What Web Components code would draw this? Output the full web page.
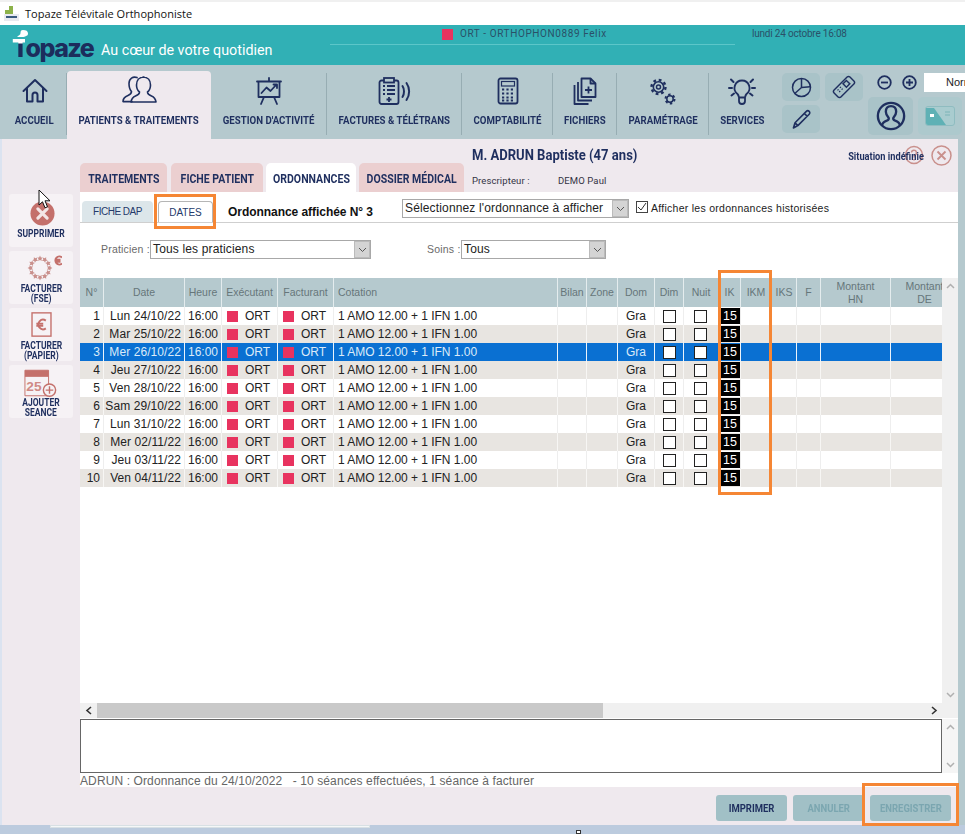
<!DOCTYPE html>
<html lang="fr"><head><meta charset="utf-8"><title>Topaze</title>
<style>
html,body{margin:0;padding:0;height:834px;width:965px;overflow:hidden;background:#efe9ee;font-family:"Liberation Sans",Arial,sans-serif}
</style></head><body>
<topaze-app></topaze-app>
<script>
const NAVY='#1f2f5f', ROSE='#c4706b';
const def=(n,fn)=>customElements.define(n,class extends HTMLElement{connectedCallback(){if(this.shadowRoot)return;this.attachShadow({mode:'open'}).innerHTML=fn(this)}});

const icons={
home:`<svg width="28" height="28" viewBox="0 0 28 28" fill="none" stroke="${NAVY}" stroke-width="2" stroke-linejoin="round" stroke-linecap="round"><path d="M2.500 14 14 3l11.500 11"/><path d="M6 11v13.500h5.500V18a2.500 2.500 0 0 1 5 0v6.500H22V11"/></svg>`,
people:`<svg width="36" height="28" viewBox="0 0 36 28" fill="none" stroke="${NAVY}" stroke-width="1.600" stroke-linejoin="round" stroke-linecap="round"><path d="M16 1.600c-4-1.500-8 1-8 6 0 4 .6 6 2.500 8 0 2-1 3-3.500 4-3 1.200-5 3-5 6h9"/><path d="M23 1c-5 0-7.500 3.500-7.500 8 0 3 1 5.500 3 7 0 2-1.500 3-4 4-2.500 1-4 3-4.500 6h25c-.5-3-2-5-4.500-6-2.500-1-4-2-4-4 2-1.500 3-4 3-7 0-4.500-2.500-8-7.500-8z"/></svg>`,
easel:`<svg width="28" height="28" viewBox="0 0 28 28" fill="none" stroke="${NAVY}" stroke-width="1.800" stroke-linecap="round" stroke-linejoin="round"><path d="M14 1v3M2 4.500h24M3.500 4.500V20h21V4.500M9 20l-3 7M19 20l3 7"/><path d="M6.500 16l5-5.500 4 3.500 6-6.500M18.500 7.500h3.500V11"/></svg>`,
clip:`<svg width="34" height="28" viewBox="0 0 34 28" fill="none" stroke="${NAVY}" stroke-width="1.800"><rect x="1.500" y="3.500" width="19" height="23.500" rx="2"/><rect x="6" y="1" width="10" height="4.500" fill="#b5c9ce"/><path d="M5 9h2M9 9h8M5 13h2M9 13h8M5 17h2M9 17h8M11 20v5M8.500 22.500h5"/><path d="M24.500 9c2 3 2 8 0 11M28.500 6c3.500 5 3.500 12 0 17" stroke-width="2" stroke-linecap="round"/></svg>`,
calc:`<svg width="22" height="28" viewBox="0 0 22 28" fill="none" stroke="${NAVY}" stroke-width="1.800"><rect x="1.500" y="1.500" width="19" height="25" rx="2"/><rect x="4.500" y="4.500" width="13" height="4.500" stroke-width="1.200"/><path d="M5 12.500h12M5 16.500h12M5 20.500h12M5 23.500h12" stroke-width="2.200" stroke-dasharray="2.200 2.200"/></svg>`,
files:`<svg width="24" height="28" viewBox="0 0 24 28" fill="none" stroke="${NAVY}" stroke-width="1.800" stroke-linejoin="round"><path d="M8.500 1.500h9l5 5V20h-14z"/><path d="M17.500 1.500v5h5"/><path d="M5 5v18.500h14M1.500 8v19h14"/><path d="M15.500 9.500v7M12 13h7"/></svg>`,
gears:`<svg width="28" height="28" viewBox="0 0 28 28" fill="none" stroke="${NAVY}"><circle cx="9.500" cy="10" r="5.200" stroke-width="1.600"/><circle cx="9.500" cy="10" r="7" stroke-width="2.400" stroke-dasharray="2.750 2.750"/><circle cx="9.500" cy="10" r="2" stroke-width="1.500"/><circle cx="21" cy="22" r="3.200" stroke-width="1.500"/><circle cx="21" cy="22" r="4.500" stroke-width="2" stroke-dasharray="2.360 2.360"/></svg>`,
bulb:`<svg width="28" height="28" viewBox="0 0 28 28" fill="none" stroke="${NAVY}" stroke-width="1.800" stroke-linecap="round" stroke-linejoin="round"><path d="M14 3.500a7.500 7.500 0 0 0-4.500 13.500c1 1 1.200 2 1.500 3.500h6c.3-1.500.5-2.500 1.500-3.500A7.500 7.500 0 0 0 14 3.500zM11 21v3a3 3 0 0 0 6 0v-3"/><path d="M3 2.500l2.500 2.500M25 2.500 22.500 5M1 11h3M24 11h3M3.500 18.500 6 16.500M24.500 18.500 22 16.500" stroke-width="2"/></svg>`,
pie:`<svg width="21" height="21" viewBox="0 0 28 28" fill="none" stroke="${NAVY}" stroke-width="2" stroke-linejoin="round"><circle cx="14" cy="14" r="12"/><path d="M14 2v12l11.500-1M14 14 5 22"/></svg>`,
remote:`<svg width="24" height="24" viewBox="0 0 30 30" fill="none" stroke="${NAVY}" stroke-width="1.800"><rect x="1" y="9" width="28" height="12" rx="2.500" transform="rotate(-45 15 15)"/><rect x="15" y="8" width="6" height="6" transform="rotate(-45 18 11)"/><path d="M7 18l4 4M10 15l4 4" stroke-dasharray="1.500 1.500" stroke-width="1.800"/></svg>`,
pen:`<svg width="21" height="21" viewBox="0 0 26 26" fill="none" stroke="${NAVY}" stroke-width="2" stroke-linejoin="round"><path d="M3 23.500 5 17 19 3c1-1 2.500-1 3.500 0s1 2.500 0 3.500L8.500 20.500zM5 17l3.500 3.500M16.500 5.500 20 9"/></svg>`,
minus:`<svg style="flex:none" width="15" height="15" viewBox="0 0 15 15" fill="none" stroke="${NAVY}" stroke-width="1.800"><circle cx="7.500" cy="7.500" r="6.300"/><path d="M4 7.500h7"/></svg>`,
plus:`<svg style="flex:none" width="15" height="15" viewBox="0 0 15 15" fill="none" stroke="${NAVY}" stroke-width="1.800"><circle cx="7.500" cy="7.500" r="6.300"/><path d="M4 7.500h7M7.500 4v7"/></svg>`,
user:`<svg width="30" height="30" viewBox="0 0 32 32" fill="none" stroke="${NAVY}" stroke-width="2.500"><circle cx="16" cy="16" r="14"/><path d="M6.500 26c.5-3 2-4 5-5 1.500-.6 2.500-1.500 2-3-2-2-3-4-3-6.500 0-3.500 2-6 5.500-6s5.500 2.500 5.500 6c0 2.500-1 4.500-3 6.500-.5 1.500.5 2.400 2 3 3 1 4.500 2 5 5" stroke-linejoin="round"/></svg>`,
card:`<svg width="30" height="20" viewBox="0 0 30 20"><rect x=".5" y=".5" width="29" height="19" rx="2.500" fill="#a9cccf" stroke="#8fbcc0"/><path d="M1 2h8l12 17H3a2 2 0 0 1-2-2z" fill="#5fb1b5"/><rect x="5" y="8" width="4" height="3" fill="#fff"/><path d="M20 6h5M20 9h5" stroke="#7cb3b8" stroke-width="1.200"/></svg>`,
del:`<svg style="margin:3px 0 0 2px" width="25" height="25" viewBox="0 0 27 27"><circle cx="13.500" cy="13.500" r="13" fill="${ROSE}"/><path d="M8.500 8.500l10 10M18.500 8.500l-10 10" stroke="#f3e6e6" stroke-width="3.400" stroke-linecap="round"/></svg>`,
stars:`<svg width="42" height="28" viewBox="0 0 42 28"><defs><path id="s" d="M20 .6l.9 1.800 1.900.2-1.400 1.400.4 2-1.800-1-1.800 1 .4-2-1.400-1.400 1.900-.2z" fill="#c98f8b"/></defs>${[0,30,60,90,120,150,180,210,240,270,300,330].map(a=>`<use href="#s" transform="rotate(${a} 20 13)"/>`).join('')}<path d="M42 2.500a4 4 0 1 0 0 6M35 4.800h5.500M35 6.700h5.500" fill="none" stroke="${ROSE}" stroke-width="1.900"/></svg>`,
bill:`<svg style="margin-bottom:3px" width="21" height="25" viewBox="0 0 24 29" fill="none" stroke="${ROSE}"><rect x="1" y="1" width="22" height="27" stroke-width="1.600"/><path d="M17 10a5.500 5.500 0 1 0 0 9M6 13.500h8M6 16h8" stroke-width="2.200"/></svg>`,
addcal:`<svg width="34" height="28" viewBox="0 0 36 29"><path d="M1 1h25v27H1z" fill="#f6f2f5" stroke="${ROSE}" stroke-width="1"/><rect x="1" y="1" width="25" height="7" fill="${ROSE}"/><text x="2.500" y="23" font-family="Liberation Sans" font-weight="700" font-size="14.500" fill="#d08a86">25</text><circle cx="27" cy="22" r="6.500" fill="#f6f2f5" stroke="${ROSE}" stroke-width="1.500"/><path d="M23 22h8M27 18v8" stroke="${ROSE}" stroke-width="1.500"/></svg>`,
};

def('cond-text',h=>`<style>:host{display:inline-block;white-space:nowrap;transform:scaleX(var(--sx,.84));transform-origin:center;}</style><slot></slot>`);

def('title-bar',()=>`<style>
:host{display:flex;align-items:center;height:23px;border-top:2px solid #f0f0f0;background:#fff;padding-left:4px;gap:6px;font:11px "Open Sans",sans-serif;letter-spacing:.03px;color:#111}
.i{width:15px;height:15px;position:relative}
</style><svg class="i" viewBox="0 0 15 15"><rect x="0" y="8" width="15" height="7" fill="#e8eaf0"/><rect x="5" y="0" width="4" height="8" fill="#8cb24a"/><rect x="1" y="4" width="5" height="4" fill="#8cb24a"/><rect x="2" y="10" width="11" height="2" fill="#3a5a80"/></svg><span>Topaze Télévitale Orthophoniste</span>`);

def('top-header',()=>`<style>
:host{display:block;height:40px;background:#31b0b5;position:relative}
.wrap{display:flex;height:40px}
.logo{width:101px;position:relative;flex:none}
.word{position:absolute;left:12px;top:8px;font:800 25px/30px Inter,sans-serif;letter-spacing:-1.500px;color:#1c2d5c;white-space:nowrap}
.t{background:linear-gradient(#fff 9px,#fff 10px,#1c2d5c 11px);-webkit-background-clip:text;background-clip:text;color:transparent}
.heart{position:absolute;left:17px;top:5px}
.tag{width:229px;flex:none;padding-top:16px;color:#fff;font:14.300px/18px Roboto,sans-serif;white-space:nowrap;box-sizing:border-box}
.c{width:405px;height:20px;flex:none;border-bottom:1px solid #5cc6c9;box-sizing:border-box;padding-left:112px}
.who{display:flex;align-items:center;gap:7px;height:18px;font:10px/18px Roboto,sans-serif;letter-spacing:.6px;color:#2a5068}
.sq{width:11px;height:11px;background:#e8335f}
.date{margin-left:17px;font:10px/18px Roboto,sans-serif;letter-spacing:-.2px;color:#2a5068;white-space:nowrap}
</style><div class="wrap"><div class="logo"><svg class="heart" width="13" height="12" viewBox="0 0 13 12"><path d="M6 0c3 0 5 1 5 3.500S9 6 6.500 7H0C2 5 3.500 5 3.500 3S4 0 6 0z" fill="#fff"/></svg><span class="word"><span class="t">T</span>opaze</span></div><div class="tag">Au cœur de votre quotidien</div>
<div class="c"><div class="who"><span class="sq"></span><span>ORT - ORTHOPHON0889 Felix</span></div></div><div class="date">lundi 24 octobre 16:08</div></div>`);

def('nav-item',h=>`<style>
:host{display:flex;flex-direction:column;align-items:center;width:var(--w);flex:none;box-sizing:border-box;height:68px;margin-top:6px;padding-top:${h.hasAttribute('active')?'5':'6'}px;position:relative;color:${NAVY}}
:host([active]){background:#efe9ee;border-radius:4px 4px 0 0}
:host([sep])::after{content:"";position:absolute;right:0;top:2px;height:62px;width:1px;background:#97adb3}
.ic{height:28px;display:flex;align-items:center;justify-content:center}
.l{margin-top:${h.hasAttribute('active')?9:8}px;font:700 11.500px/14px Roboto,sans-serif;}
</style><div class="ic">${icons[h.getAttribute('icon')]}</div><div class="l"><cond-text><slot></slot></cond-text></div>`);

def('tool-btn',h=>`<style>:host{display:flex;align-items:center;justify-content:center;background:#a9c3c8;border-radius:5px;width:var(--w,38px);height:var(--h,28px)}:host([dim]){background:#adc9cd}</style>${icons[h.getAttribute('icon')]}`);

def('main-nav',()=>`<style>
:host{display:flex;height:74px;background:#b5c9ce;overflow:hidden}
.tools{margin-left:7px;padding-top:8px;display:grid;grid-template-columns:38px 38px;grid-template-rows:27px 28px;gap:5px;flex:none}
.right{margin-left:5px;flex:none;width:97px;padding-top:8px;box-sizing:border-box}
.zoom{display:flex;align-items:center;height:19px;padding-left:9px;gap:10px;overflow:hidden}
.norm{background:#fff;width:60px;height:19px;flex:none;font:11px/19px "Liberation Sans";padding-left:22px;box-sizing:border-box;margin-left:-3px;color:#222}
.bigs{display:flex;gap:5px;margin-top:5px}
</style>
<nav-item icon="home" style="--w:67px;padding-left:2px" sep>ACCUEIL</nav-item>
<nav-item icon="people" style="--w:144px" active>PATIENTS &amp; TRAITEMENTS</nav-item>
<nav-item icon="easel" style="--w:116px" sep>GESTION D'ACTIVITÉ</nav-item>
<nav-item icon="clip" style="--w:135px" sep>FACTURES &amp; TÉLÉTRANS</nav-item>
<nav-item icon="calc" style="--w:91px" sep>COMPTABILITÉ</nav-item>
<nav-item icon="files" style="--w:64px" sep>FICHIERS</nav-item>
<nav-item icon="gears" style="--w:92px" sep>PARAMÉTRAGE</nav-item>
<nav-item icon="bulb" style="--w:66px">SERVICES</nav-item>
<div class="tools"><tool-btn icon="pie"></tool-btn><tool-btn icon="remote"></tool-btn><tool-btn icon="pen"></tool-btn></div>
<div class="right"><div class="zoom">${icons.minus}${icons.plus}<div class="norm">Normal</div></div>
<div class="bigs"><tool-btn icon="user" style="--w:45px;--h:38px"></tool-btn><tool-btn icon="card" dim style="--w:44px;--h:38px"></tool-btn></div></div>`);

def('side-btn',h=>{const two=h.innerHTML.includes('|');return `<style>
:host{display:flex;flex-direction:column;align-items:center;width:64px;height:53px;background:#f6f2f5;border-radius:3px;color:${NAVY};box-sizing:border-box;padding-top:3px;flex:none}
.ic{height:29px;display:flex;align-items:center;justify-content:center;width:100%}
.l{font:700 10px/10px Roboto,sans-serif;text-align:center;margin-top:${two?1:3}px;--sx:.85}
</style><div class="ic">${icons[h.getAttribute('icon')]}</div><div class="l"><cond-text>${h.innerHTML.split('|').join('</cond-text><br><cond-text>')}</cond-text></div>`});

def('tab-head',h=>`<style>
:host{display:flex;align-items:center;justify-content:center;height:29px;padding-top:1px;width:var(--w);flex:none;background:#ebcfd0;border-radius:5px 5px 0 0;font:700 13px/15px Roboto,sans-serif;color:${NAVY};box-sizing:border-box;--sx:.81}
:host([active]){background:#fff}
</style><cond-text><slot></slot></cond-text>`);

def('sub-tab',h=>`<style>
:host{display:flex;align-items:center;justify-content:center;height:21px;width:var(--w);flex:none;box-sizing:border-box;background:#dce6ea;border-radius:4px 4px 0 0;font:10px "Liberation Sans";color:#243a6a;}
:host([active]){background:#fff;border:1px solid #b5b5b5;border-bottom:none}
</style><slot></slot>`);

def('fake-select',h=>`<style>
:host{display:flex;align-items:stretch;width:var(--w);height:var(--h,19px);box-sizing:border-box;border:1px solid #a8a8a8;background:#fff;font:12px/16px "Liberation Sans";letter-spacing:.15px;color:#222;flex:none}
.t{flex:1;padding-left:2px;white-space:nowrap;overflow:hidden}
.b{width:16px;background:#d4d4d4;border:1px solid #bbb;box-sizing:border-box;display:flex;align-items:center;justify-content:center}
</style><div class="t"><slot></slot></div><div class="b"><svg width="9" height="6" viewBox="0 0 9 6" fill="none" stroke="#555"><path d="M1 1l3.500 3.500L8 1"/></svg></div>`);

const cols=[24,81,37,56,56,224,29,31,37,29,35,22,31,25,24,70,68];
const heads=['N°','Date','Heure','Exécutant','Facturant','Cotation','Bilan','Zone','Dom','Dim','Nuit','IK','IKM','IKS','F','Montant<br>HN','Montant<br>DE'];
const dates=['Lun 24/10/22','Mar 25/10/22','Mer 26/10/22','Jeu 27/10/22','Ven 28/10/22','Sam 29/10/22','Lun 31/10/22','Mer 02/11/22','Jeu 03/11/22','Ven 04/11/22'];

def('seance-grid',()=>{
 const tpl=cols.map(c=>c+'px').join(' ');
 const head=heads.map((t,i)=>`<div class="h ${i==5?'lft':''}">${t}</div>`).join('');
 const rows=dates.map((d,i)=>{const cl=i==2?'sel':(i%2?'alt':'');
  const sq='<span class="sq"></span><span>ORT</span>';
  const cells=[`<div class="num">${i+1}</div>`,`<div class="date">${d}</div>`,`<div class="hr">16:00</div>`,`<div class="ort">${sq}</div>`,`<div class="ort">${sq}</div>`,`<div class="cot">1 AMO 12.00 + 1 IFN 1.00</div>`,'<div></div>','<div></div>',`<div class="dom">Gra</div>`,`<div class="chk"><i></i></div>`,`<div class="chk"><i style="margin-right:1px"></i></div>`,`<div class="ik"><b>15</b></div>`,'<div></div>','<div></div>','<div></div>','<div></div>','<div></div>'].join('');
  return `<div class="r ${cl}">${cells}</div>`}).join('');
 return `<style>
 :host{display:block;width:862px;height:425px;overflow:hidden;background:#fff;flex:none}
 .g,.r{display:grid;grid-template-columns:${tpl};width:880px}
 .h{height:29px;background:#b5c9ce;border-right:1px solid #e4ecee;box-sizing:border-box;display:flex;align-items:center;justify-content:center;text-align:center;font:10.500px/13px "Liberation Sans";color:#66767a;white-space:nowrap;overflow:hidden}
 .h.lft{justify-content:flex-start;padding-left:4px}
 .r{height:18px;background:#fff;color:#222;font:12px/18px "Liberation Sans"}
 .r>div{border-right:1px solid #eeeeee;box-sizing:border-box;height:18px;white-space:nowrap;overflow:hidden}
 .r.alt{background:#e8e5e1}.r.alt>div{border-right-color:#f7f6f4}
 .r.sel{background:#0a70d2;color:#dcebf8}.r.sel>div{border-right-color:#eaf3fb}
 .num{text-align:right;padding-right:3px}.date{text-align:right;padding-right:3px;letter-spacing:.08px}.hr{text-align:center}
 .ort{display:flex;align-items:center;padding-left:5px;gap:7px}.sq{width:11px;height:11px;background:#e8335f;flex:none}
 .cot{padding-left:4px;letter-spacing:-.03px}.dom{padding-left:8px}
 .chk{display:flex;align-items:center;justify-content:center}.chk i{display:block;width:13px;height:13px;background:#fff;border:1px solid #222;box-sizing:border-box}
 .r>.ik{padding-left:1px}.ik b{display:block;width:20px;height:16px;margin-top:1px;background:#000;color:#fff;font:12.500px/16px "Liberation Sans";padding-left:3px;box-sizing:border-box}
 </style><div class="g">${head}</div>${rows}`;
});

def('scroll-v',h=>`<style>:host{display:flex;flex-direction:column;justify-content:space-between;align-items:center;width:16px;height:var(--h);background:var(--bg,#f0f0f0);padding:5px 0;box-sizing:border-box;flex:none}</style>
<svg width="9" height="6" viewBox="0 0 9 6" fill="none" stroke="#b0b0b0" stroke-width="1.500"><path d="M1 5l3.500-3.500L8 5"/></svg><svg width="9" height="6" viewBox="0 0 9 6" fill="none" stroke="#b0b0b0" stroke-width="1.500"><path d="M1 1l3.500 3.500L8 1"/></svg>`);

def('scroll-h',()=>`<style>:host{display:flex;height:15px;width:878px;background:#f0f0f0;align-items:center;position:relative;flex:none}
.th{position:absolute;left:17px;width:506px;top:0;bottom:0;background:#c9c9c9}
svg{position:absolute;top:3px}</style><svg style="left:5px" width="7" height="9" viewBox="0 0 7 9" fill="none" stroke="#333" stroke-width="1.600"><path d="M6 1 2 4.500 6 8"/></svg><div class="th"></div><svg style="right:20px" width="7" height="9" viewBox="0 0 7 9" fill="none" stroke="#333" stroke-width="1.600"><path d="M1 1l4 3.500L1 8"/></svg>`);

def('act-btn',h=>`<style>:host{display:flex;align-items:center;justify-content:center;width:var(--w);height:26px;background:#a1c0c6;border-radius:3px;font:700 11px Roboto,sans-serif;color:${NAVY};flex:none;--sx:.86}
:host([off]){color:#7ba6b0}</style><cond-text><slot></slot></cond-text>`);

def('orange-box',()=>`<style>:host{display:block;position:absolute;border:3px solid #f58634;box-sizing:border-box;pointer-events:none;z-index:5}</style>`);

def('topaze-app',()=>`<style>
:host{display:flex;flex-direction:column;width:965px;height:834px;position:relative;overflow:hidden;background:#efe9ee}
.main{display:flex;height:686px;flex:none}
.edge{width:2px;background:#dbe3f0;flex:none}
.side{width:78px;flex:none;padding:55px 0 0 7px;box-sizing:border-box;display:flex;flex-direction:column;gap:4px}
.work{width:878px;flex:none;display:flex;flex-direction:column}
.rstrip{width:7px;background:#b5c9ce;flex:none}
.top{display:flex;height:53px;flex:none}
.tabs{display:flex;gap:3px;width:392px;align-items:flex-end;flex:none;padding-bottom:0}
.info{padding:8px 0 0 0;flex:1;color:${NAVY};position:relative}
.nm{display:flex;align-items:center;height:18px}
.name{font:700 14.500px/18px Roboto,sans-serif;width:200px;--sx:.9}.name cond-text{transform-origin:left}
.sit{margin-left:175px;font:700 10.500px/18px Roboto,sans-serif;--sx:.88;width:78px;display:flex;justify-content:center;margin-top:1px;white-space:nowrap}
.ics{display:flex;margin-left:-21px;gap:7px;margin-top:-2px}
.pr{display:flex;font:9.500px/12px Roboto,sans-serif;letter-spacing:.1px;margin-top:10px;color:#334}
.pr span:first-child{width:86px}
.panel{background:#fff;height:595px;flex:none;display:flex;flex-direction:column}
.tb{height:30px;border-bottom:1px solid #cfcfcf;display:flex;flex:none;position:relative}
.subs{display:flex;gap:5px;padding:9px 0 0 2px;width:136px;flex:none;box-sizing:border-box}
.aff{font:700 12px/16px "Liberation Sans";color:#111;margin-top:12px;letter-spacing:-.05px;width:174px;flex:none;white-space:nowrap}
.sel1{margin-top:7px}
.cb{margin:9px 0 0 7px;display:flex;gap:3px;font:10.500px/14px "Liberation Sans";letter-spacing:.27px;color:#222;white-space:nowrap}
.cb i{display:block;width:12px;height:12px;border:1px solid #444;box-sizing:border-box}
.flt{display:flex;padding:17px 0 0 21px;height:18px;align-items:flex-start;flex:none;font:10.500px/18px "Liberation Sans";color:#6a6a6a;letter-spacing:.2px}
.gr{display:flex;margin-top:20px;flex:none}
.l1{width:49px;flex:none}.l2{width:34px;margin-left:56px;flex:none;white-space:nowrap}
.box{display:flex;margin-top:1px;flex:none}
.ta{width:862px;height:54px;border:1px solid #666;box-sizing:border-box;background:#fff}
.st{font:12px/14px "Liberation Sans";color:#666;letter-spacing:.11px;white-space:pre;flex:none;margin-top:1px}
.foot{flex:1;display:flex;justify-content:flex-end;padding:8px 7px 0 0;gap:6px;align-items:flex-start}
.bottom{height:9px;background:#bccbde;flex:none;position:relative}
.bottom div{height:3px;width:320px;margin-left:50px;background:#f5f7f8;border:1px solid #d8e0e4;box-sizing:border-box}
.handle{position:absolute;left:576px;top:5px;width:5px;height:4px;background:#fff;border:1px solid #333;box-sizing:border-box}
.ptr{position:absolute;left:38px;top:189px;z-index:6}
</style>
<title-bar></title-bar><top-header></top-header><main-nav></main-nav>
<div class="main"><div class="edge"></div>
<div class="side">
<side-btn icon="del">SUPPRIMER</side-btn>
<side-btn icon="stars">FACTURER|(FSE)</side-btn>
<side-btn icon="bill">FACTURER|(PAPIER)</side-btn>
<side-btn icon="addcal">AJOUTER|SEANCE</side-btn>
</div>
<div class="work">
 <div class="top"><div class="tabs"><tab-head style="--w:87px">TRAITEMENTS</tab-head><tab-head style="--w:92px;margin-left:1px">FICHE PATIENT</tab-head><tab-head style="--w:90px" active>ORDONNANCES</tab-head><tab-head style="--w:105px">DOSSIER MÉDICAL</tab-head></div>
 <div class="info"><div class="nm"><div class="name"><cond-text>M. ADRUN Baptiste (47 ans)</cond-text></div><div class="sit"><cond-text>Situation indéfinie</cond-text></div>
 <div class="ics"><svg width="20" height="20" viewBox="0 0 20 20" fill="none" stroke="#c9908c" stroke-width="1.500"><circle cx="10" cy="10" r="8.500"/><path d="M7.500 7.500a2.500 2.500 0 1 1 3.500 2.500c-1 .5-1 1-1 2.500M10 14v1.500"/></svg><svg width="21" height="21" viewBox="0 0 21 21" fill="none" stroke="#c9908c" stroke-width="1.500"><circle cx="10.500" cy="10.500" r="9.500"/><path d="M6.500 6.500l8 8M14.500 6.500l-8 8" stroke-width="1.800"/></svg></div></div>
 <div class="pr"><span>Prescripteur :</span><span>DEMO Paul</span></div></div></div>
 <div class="panel">
  <div class="tb"><div class="subs"><sub-tab style="--w:71px;letter-spacing:-.5px">FICHE DAP</sub-tab><sub-tab style="--w:55px" active>DATES</sub-tab></div><div class="aff" style="margin-left:12px;width:174px">Ordonnance affichée N° 3</div><fake-select class="sel1" style="--w:227px">Sélectionnez l'ordonnance à afficher</fake-select><div class="cb"><i><svg width="10" height="10" viewBox="0 0 10 10" fill="none" stroke="#333" style="display:block"><path d="M1 5l3 3 5-7"/></svg></i><span>Afficher les ordonnances historisées</span></div></div>
  <div class="flt"><span class="l1">Praticien :</span><fake-select style="--w:221px">Tous les praticiens</fake-select><span class="l2">Soins :</span><fake-select style="--w:145px">Tous</fake-select></div>
  <div class="gr"><seance-grid></seance-grid><scroll-v style="--h:425px"></scroll-v></div>
  <scroll-h></scroll-h>
  <div class="box"><div class="ta"></div><scroll-v style="--h:54px;--bg:#f5f5f5"></scroll-v></div>
  <div class="st">ADRUN : Ordonnance du 24/10/2022   - 10 séances effectuées, 1 séance à facturer</div>
 </div>
 <div class="foot"><act-btn style="--w:71px">IMPRIMER</act-btn><act-btn style="--w:71px" off>ANNULER</act-btn><act-btn style="--w:81px" off>ENREGISTRER</act-btn></div>
</div>
<div class="rstrip"></div></div>
<div class="bottom"><div></div><span class="handle"></span></div>
<orange-box style="left:154px;top:194px;width:62px;height:35px"></orange-box>
<orange-box style="left:718px;top:270px;width:54px;height:225px"></orange-box>
<orange-box style="left:862px;top:783px;width:97px;height:43px"></orange-box>
<svg class="ptr" width="13" height="20" viewBox="0 0 13 20"><path d="M1 1v15l3.500-3.200 2.500 6 2.500-1-2.500-6H12z" fill="#fff" stroke="#111" stroke-width="1"/></svg>`);
</script></body></html>
